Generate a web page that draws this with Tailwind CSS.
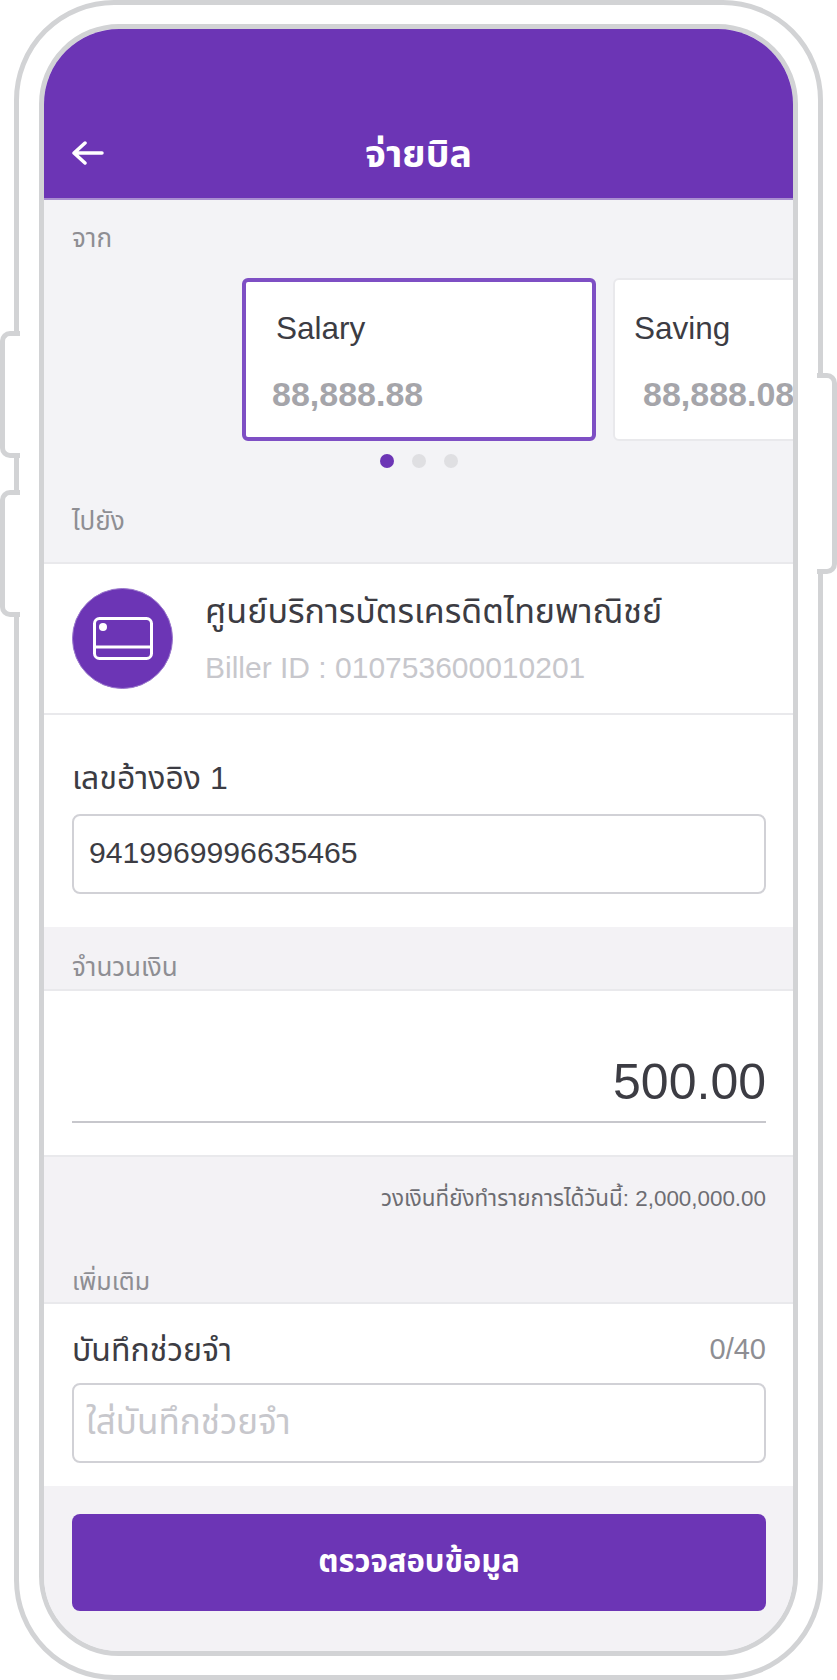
<!DOCTYPE html>
<html lang="th">
<head>
    <meta charset="UTF-8">
    <title>จ่ายบิล</title>
    <script src="https://cdn.jsdelivr.net/npm/@tailwindcss/browser@4"></script>
</head>
<body class="bg-white font-['Liberation_Sans','Noto_Sans','Noto_Sans_Thai',sans-serif]">
    <div class="relative w-[837px] h-[1680px] overflow-hidden bg-white">
        <!-- side buttons -->
        <div class="absolute left-0 top-[331px] w-[20px] h-[127px] bg-white border-[5px] border-r-0 border-[#d2d3d5] rounded-l-[10px]"></div>
        <div class="absolute left-0 top-[490px] w-[20px] h-[127px] bg-white border-[5px] border-r-0 border-[#d2d3d5] rounded-l-[10px]"></div>
        <div class="absolute right-0 top-[373px] w-[20px] h-[201px] bg-white border-[5px] border-l-0 border-[#d2d3d5] rounded-r-[10px]"></div>

        <!-- phone body -->
        <div class="mx-[14px] h-[1680px] border-[5px] border-[#d2d3d5] rounded-[100px] px-[20px] pt-[19px] pb-[19px] bg-transparent">
            <div class="h-full border-[5px] border-[#d2d3d5] rounded-[80px] overflow-hidden bg-[#f3f3f6] flex flex-col">
                <!-- header -->
                <div class="h-[171px] shrink-0 bg-[#6c35b5] border-b-2 border-[#a98fd0] flex items-end pb-[33px] pl-[28px] relative">
                    <svg class="w-[32px] h-[24px]" viewBox="0 0 32 24" fill="none" stroke="white" stroke-width="3.500" stroke-linecap="round" stroke-linejoin="round"><path d="M30 12H3M13 2L2 12L13 22"/></svg>
                    <div class="absolute inset-x-0 bottom-[22px] text-center text-[37.500px] leading-[44px] font-bold text-white">จ่ายบิล</div>
                </div>

                <div class="h-[78px] shrink-0 pl-[28px] pt-[22px] text-[26px] leading-[32px] text-[#8e8e93]">จาก</div>

                <!-- account cards -->
                <div class="h-[165px] shrink-0 flex pl-[198px] gap-[17px] overflow-hidden">
                    <div class="w-[354px] h-[163px] shrink-0 bg-white border-[4px] border-[#7e4fc4] rounded-[6px] pl-[30px] pt-[26px]">
                        <div class="text-[31.500px] leading-[40px] text-[#3c3c43]">Salary</div>
                        <div class="mt-[26px] -ml-[4px] text-[34px] leading-[40px] font-bold text-[#a5a5aa]">88,888.88</div>
                    </div>
                    <div class="w-[354px] h-[163px] shrink-0 bg-white border-[2px] border-[#e9e9ec] rounded-[6px] pl-[19px] pt-[28px]">
                        <div class="text-[31.500px] leading-[40px] text-[#3c3c43]">Saving</div>
                        <div class="mt-[26px] ml-[9px] text-[34px] leading-[40px] font-bold text-[#a5a5aa] whitespace-nowrap">88,888.08</div>
                    </div>
                </div>

                <!-- dots -->
                <div class="h-[14px] mt-[11px] shrink-0 flex justify-center gap-[18px]">
                    <span class="w-[14px] h-[14px] rounded-full bg-[#6c35b5]"></span>
                    <span class="w-[14px] h-[14px] rounded-full bg-[#dfdfe2]"></span>
                    <span class="w-[14px] h-[14px] rounded-full bg-[#dfdfe2]"></span>
                </div>

                <div class="h-[94px] shrink-0 pl-[28px] pt-[37px] text-[26px] leading-[32px] text-[#8e8e93]">ไปยัง</div>

                <!-- biller -->
                <div class="h-[153px] shrink-0 bg-white border-y-2 border-[#e9e9ec] flex items-center pl-[28px] pr-[27px] gap-[32px]">
                    <div class="w-[101px] h-[101px] rounded-full bg-[#6c35b5] border border-[#9a78cc] flex items-center justify-center">
                        <svg class="w-[60px] h-[43px]" viewBox="0 0 60 43" fill="none" stroke="white" stroke-width="3"><rect x="1.500" y="1.500" width="57" height="40" rx="5"/><path d="M2 30H58"/><circle cx="10" cy="10" r="4" fill="white" stroke="none"/></svg>
                    </div>
                    <div class="flex-1 whitespace-nowrap">
                        <div class="text-[34px] leading-[40px] text-[#3c3c43]">ศูนย์บริการบัตรเครดิตไทยพาณิชย์</div>
                        <div class="mt-[19px] text-[30px] leading-[36px] text-[#c7c7cc]">Biller ID : 010753600010201</div>
                    </div>
                </div>

                <!-- reference -->
                <div class="h-[212px] shrink-0 bg-white pl-[28px] pr-[27px] pt-[43px]">
                    <div class="text-[32px] leading-[40px] text-[#3c3c43]">เลขอ้างอิง 1</div>
                    <div class="mt-[16px] h-[80px] border-2 border-[#d1d1d6] rounded-[8px] flex items-center px-[15px] pb-[3px] text-[30.200px] text-[#3c3c43]">9419969996635465</div>
                </div>

                <!-- amount -->
                <div class="h-[62px] shrink-0 bg-[#f3f2f5] pl-[28px] pt-[24px] text-[26px] leading-[32px] text-[#8e8e93]">จำนวนเงิน</div>
                <div class="h-[168px] shrink-0 bg-white border-y-2 border-[#e9e9ec] pl-[28px] pr-[27px] pt-[59px]">
                    <div class="h-[73px] border-b-2 border-[#c7c7cc] text-right text-[50px] leading-[64px] text-[#3c3c43]">500.00</div>
                </div>
                <div class="h-[88px] shrink-0 bg-[#f3f2f5] pr-[27px] pt-[26px] text-right text-[22.400px] leading-[32px] text-[#6d6d72]">วงเงินที่ยังทำรายการได้วันนี้: 2,000,000.00</div>

                <div class="h-[57px] shrink-0 bg-[#f3f2f5] pl-[28px] pt-[20px] text-[25px] leading-[32px] text-[#8e8e93]">เพิ่มเติม</div>

                <!-- memo -->
                <div class="h-[184px] shrink-0 bg-white border-t-2 border-[#e9e9ec] pl-[28px] pr-[27px] pt-[26px]">
                    <div class="flex justify-between items-center h-[40px]">
                        <span class="text-[32px] leading-[40px] text-[#3c3c43]">บันทึกช่วยจำ</span>
                        <span class="text-[29px] text-[#8e8e93]">0/40</span>
                    </div>
                    <div class="mt-[13px] h-[80px] border-2 border-[#d1d1d6] rounded-[8px] flex items-center px-[12px] pb-[2px] text-[35px] text-[#c7c7cc]">ใส่บันทึกช่วยจำ</div>
                </div>

                <!-- submit -->
                <div class="flex-1 bg-[#f3f2f5] pl-[28px] pr-[27px] pt-[28px]">
                    <button class="w-full h-[97px] bg-[#6c35b5] rounded-[8px] text-[31px] font-bold text-white">ตรวจสอบข้อมูล</button>
                </div>
            </div>
        </div>
    </div>
</body>
</html>
